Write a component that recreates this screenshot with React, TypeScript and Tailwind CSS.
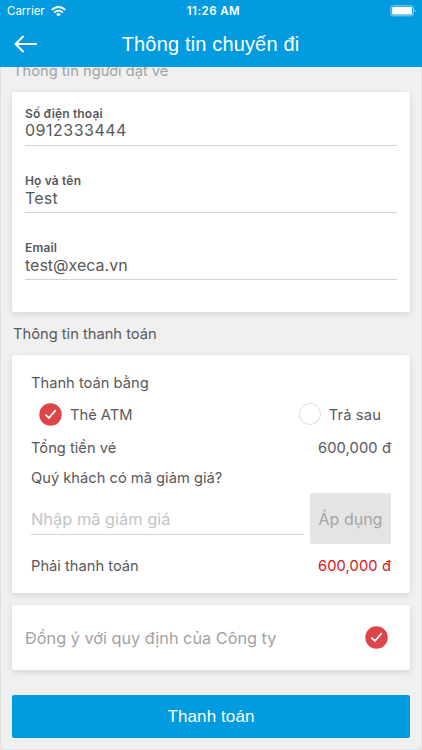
import React from "react";

const BODY = "font-['Inter','Liberation_Sans',sans-serif]";
const CARD = "mx-3 w-[398px] rounded-[2px] bg-white shadow-[0_2px_6px_rgba(0,0,0,0.12)]";

function Check() {
  return (
    <svg className="block shrink-0" width="23" height="23" viewBox="0 0 23 23" fill="none">
      <circle cx="11.5" cy="11.5" r="11.2" fill="#df4449" />
      <path d="M6.3 11.7 L9.9 15 L16.7 7.2" stroke="white" strokeWidth="1.8" />
    </svg>
  );
}

function Field({ label, value, valueClass }: { label: string; value: string; valueClass: string }) {
  return (
    <div className="mb-[27px] h-10 border-b border-[#d3d3d3] text-[#58585a]">
      <div className="h-[15px] text-[12px] leading-[15px] font-semibold tracking-[0.16px]">{label}</div>
      <div className={`text-[16px] ${valueClass}`}>{value}</div>
    </div>
  );
}

export default function App() {
  return (
    <div className={`flex h-[750px] w-[422px] flex-col overflow-hidden bg-[#e2e2e2] ${BODY}`}>
      <header className="h-[67px] shrink-0 bg-[#039be0] text-white">
        <div className="grid h-[22px] grid-cols-3 items-center pr-[5px] pl-[7px] text-[11px] leading-[22px]">
          <div className="flex items-center gap-[6px]">
            <span className="text-[11.5px]">Carrier</span>
            <svg width="15" height="11" viewBox="0 0 15 11" fill="none">
              <path d="M0.8 3.9 C4.5 0 10.5 0 14.2 3.9" stroke="white" strokeWidth="2" />
              <path d="M3.2 6.5 C5.6 4.1 9.4 4.1 11.8 6.5" stroke="white" strokeWidth="1.8" />
              <path d="M5.1 8.2 C6.4 6.9 8.6 6.9 9.9 8.2 L7.5 10.6 Z" fill="white" />
            </svg>
          </div>
          <span className="pl-[3px] text-center text-[11.5px] font-semibold tracking-[0.45px] whitespace-nowrap">11:26 AM</span>
          <svg className="justify-self-end" width="27" height="12" viewBox="0 0 27 12" fill="none">
            <rect x="0.8" y="0.8" width="22.6" height="10" rx="2.3" stroke="white" strokeOpacity="0.55" />
            <rect x="2.1" y="2.1" width="20" height="7.4" rx="0.9" fill="white" />
            <path d="M24.6 4 Q26.6 5.8 24.6 7.6Z" fill="white" fillOpacity="0.6" />
          </svg>
        </div>
        <div className="flex h-[45px] items-center pr-[13px] pl-[13px]">
          <svg width="25" height="20" viewBox="0 0 25 20" fill="none" stroke="white" strokeWidth="2.1" strokeLinecap="round" strokeLinejoin="round">
            <path d="M23 9 H2.5 M10 1.5 L2.5 9 L10 16.5" />
          </svg>
          <h1 className="flex-1 pr-[30px] pb-[2px] pl-[4px] text-center font-['Liberation_Sans',sans-serif] text-[20px] leading-[24px] tracking-[0.16px] whitespace-nowrap">Thông tin chuyến đi</h1>
        </div>
      </header>

      <main className="flex h-[683px] w-[422px] flex-col overflow-hidden rounded-b-[5px] border-x border-b border-[#e2e2e2] bg-[#f0f0f0] text-[14.7px] text-[#58585a]">
        <div className="-mx-px">
          <div className="h-[25px] pl-[13px] text-[#a2a2a2]">
            <div className="-translate-y-[6px] leading-5">Thông tin người đặt vé</div>
          </div>

          <section className={`${CARD} h-[220px] px-[13px] pt-[14px]`}>
            <Field label="Số điện thoại" value="0912333444" valueClass="leading-[19px] tracking-[0.5px]" />
            <Field label="Họ và tên" value="Test" valueClass="leading-[20px] tracking-[0.2px]" />
            <Field label="Email" value="test@xeca.vn" valueClass="leading-[20px]" />
          </section>

          <h2 className="h-[43px] pl-[13px] leading-[44px]">Thông tin thanh toán</h2>

          <section className={`${CARD} h-[238px] pr-[19px] pl-[19px] pt-[17px]`}>
            <div className="h-[21px] leading-[22px]">Thanh toán bằng</div>
            <div className="mt-[9px] flex h-[24px] items-center justify-between pr-[10px] pl-[8px]">
              <div className="flex items-center gap-[8px]">
                <Check />
                <span className="pt-[2px]">Thẻ ATM</span>
              </div>
              <div className="flex items-center gap-[8px]">
                <span className="size-[22px] rounded-full border-[1.5px] border-[#dedede]" />
                <span className="pt-[2px] tracking-[0.15px]">Trả sau</span>
              </div>
            </div>
            <div className="mt-[11px] flex h-[22px] items-center justify-between">
              <span>Tổng tiền vé</span>
              <span className="tracking-[0.1px]">600,000 đ</span>
            </div>
            <div className="mt-[8px] h-[22px] leading-[22px]">Quý khách có mã giảm giá?</div>
            <div className="mt-[4px] flex h-[51px] justify-between">
              <div className="h-[42px] w-[273px] border-b border-[#d3d3d3] pt-[15px] text-[16.4px] leading-[22px] text-[#c3c3c7]">Nhập mã giảm giá</div>
              <button className="h-[51px] w-[81px] rounded-[2px] bg-[#e4e4e4] text-[16px] whitespace-nowrap text-[#a5a5a5]">Áp dụng</button>
            </div>
            <div className="mt-[11px] flex h-[22px] items-center justify-between">
              <span>Phải thanh toán</span>
              <span className="tracking-[0.1px] text-[#d9161b]">600,000 đ</span>
            </div>
          </section>

          <section className={`${CARD} mt-[12px] flex h-[65px] items-center justify-between pr-[22px] pl-[13px]`}>
            <span className="pt-[2px] text-[16.3px] text-[#a2a2a2]">Đồng ý với quy định của Công ty</span>
            <Check />
          </section>

          <button className="mx-3 mt-[25px] block h-[43px] w-[398px] rounded-[2px] bg-[#039be0] font-['Liberation_Sans',sans-serif] text-[17px] tracking-[0.1px] text-white">Thanh toán</button>
        </div>
      </main>
    </div>
  );
}
